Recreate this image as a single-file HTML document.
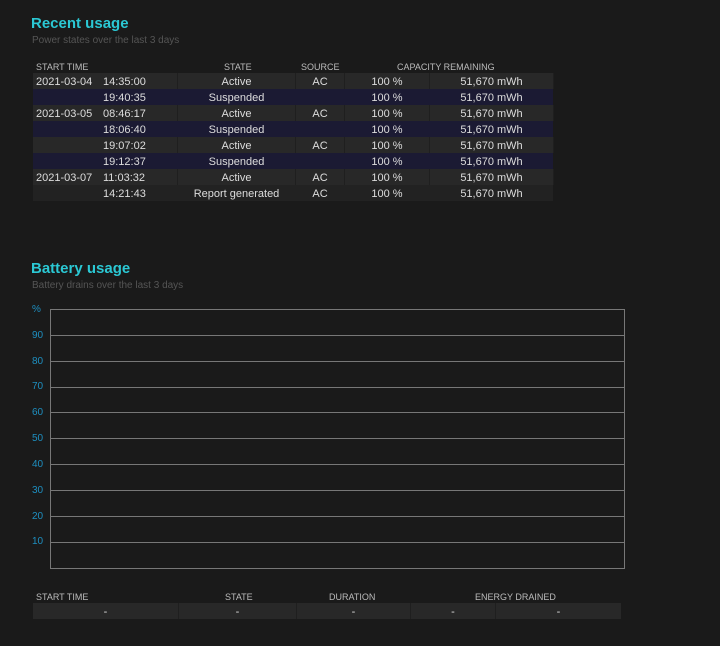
<!DOCTYPE html><html><head><style>
body{margin:0;width:720px;height:646px;background:#1a1a1a;font-family:"Liberation Sans",sans-serif;position:relative;overflow:hidden;color:#ddd}
.a{position:absolute;white-space:nowrap}
.t{color:#2bc8d4;font-size:15px;font-weight:bold}
.s{color:#555;font-size:10px}
.h{color:#bbb;font-size:9px}
.r{position:absolute;left:33px;width:520px;height:16px;font-size:11px;line-height:18px}
.r div{position:absolute;top:0;height:16px;text-align:center}
.A{background:#282828}.S{background:#1b1a33}
.c1{left:0;width:144px}.c2{left:145px;width:117px}.c3{left:263px;width:48px}.c4{left:312px;width:84px}.c5{left:397px;width:123px}
.A div{border-right:1px solid #1f1f1f}
.g{position:absolute;left:50px;width:574px;height:1px;background:#777}
.y{position:absolute;left:32px;color:#1e8fc0;font-size:10px}
</style></head><body>
<div class="a t" style="left:31px;top:15px">Recent usage</div>
<div class="a s" style="left:32px;top:35px">Power states over the last 3 days</div>
<div class="a h" style="left:36px;top:62px">START TIME</div>
<div class="a h" style="left:224px;top:62px">STATE</div>
<div class="a h" style="left:301px;top:62px">SOURCE</div>
<div class="a h" style="left:397px;top:62px">CAPACITY REMAINING</div>
<div class="r A" style="top:73px"><div class="c1"></div><div class="c2">Active</div><div class="c3">AC</div><div class="c4">100 %</div><div class="c5">51,670 mWh</div><span class="a" style="left:3px">2021-03-04</span><span class="a" style="left:70px">14:35:00</span></div>
<div class="r S" style="top:89px"><div class="c2">Suspended</div><div class="c4">100 %</div><div class="c5">51,670 mWh</div><span class="a" style="left:70px">19:40:35</span></div>
<div class="r A" style="top:105px"><div class="c1"></div><div class="c2">Active</div><div class="c3">AC</div><div class="c4">100 %</div><div class="c5">51,670 mWh</div><span class="a" style="left:3px">2021-03-05</span><span class="a" style="left:70px">08:46:17</span></div>
<div class="r S" style="top:121px"><div class="c2">Suspended</div><div class="c4">100 %</div><div class="c5">51,670 mWh</div><span class="a" style="left:70px">18:06:40</span></div>
<div class="r A" style="top:137px"><div class="c1"></div><div class="c2">Active</div><div class="c3">AC</div><div class="c4">100 %</div><div class="c5">51,670 mWh</div><span class="a" style="left:70px">19:07:02</span></div>
<div class="r S" style="top:153px"><div class="c2">Suspended</div><div class="c4">100 %</div><div class="c5">51,670 mWh</div><span class="a" style="left:70px">19:12:37</span></div>
<div class="r A" style="top:169px"><div class="c1"></div><div class="c2">Active</div><div class="c3">AC</div><div class="c4">100 %</div><div class="c5">51,670 mWh</div><span class="a" style="left:3px">2021-03-07</span><span class="a" style="left:70px">11:03:32</span></div>
<div class="r" style="top:185px;background:#222"><div class="c1"></div><div class="c2">Report generated</div><div class="c3">AC</div><div class="c4">100 %</div><div class="c5">51,670 mWh</div><span class="a" style="left:70px">14:21:43</span></div>

<div class="a t" style="left:31px;top:260px">Battery usage</div>
<div class="a s" style="left:32px;top:280px">Battery drains over the last 3 days</div>
<div class="a" style="left:50px;top:309px;width:573px;height:258px;border:1px solid #777"></div>
<div class="g" style="top:335px"></div><div class="g" style="top:361px"></div><div class="g" style="top:387px"></div><div class="g" style="top:412px"></div><div class="g" style="top:438px"></div><div class="g" style="top:464px"></div><div class="g" style="top:490px"></div><div class="g" style="top:516px"></div><div class="g" style="top:542px"></div>
<div class="y" style="top:304px">%</div><div class="y" style="top:330px">90</div><div class="y" style="top:356px">80</div><div class="y" style="top:381px">70</div><div class="y" style="top:407px">60</div><div class="y" style="top:433px">50</div><div class="y" style="top:459px">40</div><div class="y" style="top:485px">30</div><div class="y" style="top:511px">20</div><div class="y" style="top:536px">10</div>

<div class="a h" style="left:36px;top:592px">START TIME</div>
<div class="a h" style="left:225px;top:592px">STATE</div>
<div class="a h" style="left:329px;top:592px">DURATION</div>
<div class="a h" style="left:475px;top:592px">ENERGY DRAINED</div>
<div class="r A" style="top:603px;width:588px"><div style="left:0;width:145px">-</div><div style="left:146px;width:117px">-</div><div style="left:264px;width:113px">-</div><div style="left:378px;width:84px">-</div><div style="left:463px;width:125px;border:none">-</div></div>
</body></html>
